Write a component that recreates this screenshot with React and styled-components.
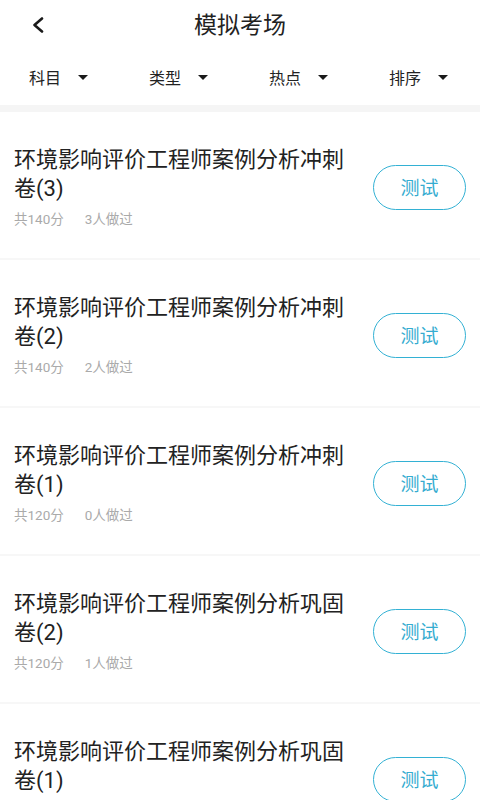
import React from "react";
import styled, { createGlobalStyle } from "styled-components";

const Global = createGlobalStyle`
  html, body { margin: 0; padding: 0; background: #fff; }
  body { font-family: Roboto, "Noto Sans CJK SC", sans-serif; }
  * { box-sizing: border-box; }
`;

const Page = styled.div`
  width: 480px;
  min-height: 800px;
  background: #fff;
  overflow: hidden;
`;

const TopBar = styled.div`
  height: 50px;
  display: flex;
  align-items: center;
  justify-content: center;
  padding-bottom: 5px;
  position: relative;
`;

const BackButton = styled.button`
  position: absolute;
  left: 24px;
  top: 11px;
  width: 28px;
  height: 28px;
  border: none;
  background: none;
  padding: 0;
  display: flex;
  align-items: center;
  justify-content: center;
`;

const Title = styled.h1`
  margin: 0;
  font-size: 23px;
  font-weight: 400;
  color: #222;
  line-height: 30px;
  font-family: "Noto Sans CJK SC", sans-serif;
`;

const FilterBar = styled.div`
  height: 55px;
  display: grid;
  grid-template-columns: repeat(4, 1fr);
  border-bottom: 7px solid #f5f5f5;
  box-sizing: content-box;
`;

const Filter = styled.div`
  display: flex;
  align-items: center;
  justify-content: center;
  gap: 17px;
  font-size: 16px;
  color: #222;
  font-family: "Noto Sans CJK SC", sans-serif;
  padding-bottom: 2px;
  padding-right: 3px;
`;

const Caret = styled.span`
  width: 0;
  height: 0;
  border-left: 5.5px solid transparent;
  border-right: 5.5px solid transparent;
  border-top: 5px solid #1a1a1a;
  margin-top: 1px;
`;

const Item = styled.div`
  display: flex;
  align-items: center;
  padding: 33px 14px 29px 14px;
  border-bottom: 2px solid #f7f7f7;
`;

const Info = styled.div`
  flex: 1;
  min-width: 0;
  padding-right: 14px;
`;

const ItemTitle = styled.div`
  font-size: 22px;
  line-height: 29px;
  color: #222;
  max-width: 340px;
`;

const Meta = styled.div`
  margin-top: 6px;
  display: flex;
  gap: 21px;
  font-size: 13.5px;
  line-height: 20px;
  color: #aaa;
`;

const TestButton = styled.button`
  width: 93px;
  height: 45px;
  border: 1.5px solid #33b1d4;
  border-radius: 23px;
  background: #fff;
  color: #35acd0;
  font-size: 19px;
  font-family: "Noto Sans CJK SC", sans-serif;
  flex-shrink: 0;
  padding: 0 0 1px 0;
`;

const items = [
  { title: "环境影响评价工程师案例分析冲刺卷(3)", score: 140, done: 3 },
  { title: "环境影响评价工程师案例分析冲刺卷(2)", score: 140, done: 2 },
  { title: "环境影响评价工程师案例分析冲刺卷(1)", score: 120, done: 0 },
  { title: "环境影响评价工程师案例分析巩固卷(2)", score: 120, done: 1 },
  { title: "环境影响评价工程师案例分析巩固卷(1)", score: 120, done: 0 },
];

export default function App() {
  return (
    <Page>
      <Global />
      <TopBar>
        <BackButton aria-label="返回">
          <svg width="14" height="16" viewBox="0 0 14 16">
            <path d="M11 1.5 L3.5 8 L11 14.5" fill="none" stroke="#1a1a1a" strokeWidth="2.6" strokeLinecap="round" strokeLinejoin="round" />
          </svg>
        </BackButton>
        <Title>模拟考场</Title>
      </TopBar>
      <FilterBar>
        {["科目", "类型", "热点", "排序"].map((f) => (
          <Filter key={f}>
            <span>{f}</span>
            <Caret />
          </Filter>
        ))}
      </FilterBar>
      {items.map((it, i) => (
        <Item key={i}>
          <Info>
            <ItemTitle>{it.title}</ItemTitle>
            <Meta>
              <span>共{it.score}分</span>
              <span>{it.done}人做过</span>
            </Meta>
          </Info>
          <TestButton>测试</TestButton>
        </Item>
      ))}
    </Page>
  );
}
